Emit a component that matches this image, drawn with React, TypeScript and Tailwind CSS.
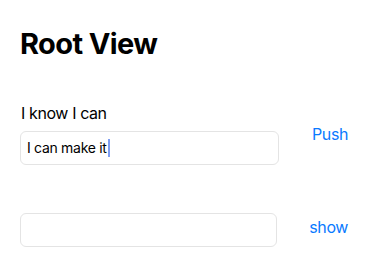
export default function App() {
  return (
    <div className="w-[380px] h-[264px] bg-white pl-5 pr-8 pt-[26px] font-['Inter','Noto_Sans',sans-serif] text-black overflow-hidden">
      {/* Title */}
      <h1 className="text-[29px] leading-[36px] font-bold tracking-[-0.6px]">Root View</h1>

      {/* First row: label + field, push button */}
      <div className="mt-[40px] flex items-center gap-[33px]">
        <div className="flex-1 flex flex-col">
          <p className="text-[16px] leading-[22px] tracking-[-0.4px] pl-[1px]">I know I can</p>
          <div className="mt-[7px] h-[34px] rounded-[6px] border border-[#e4e4e4] pl-[6px] flex items-center text-[14px] leading-[20px] tracking-[-0.3px]">
            <span>I can make it</span>
            <span className="shrink-0 w-[2px] h-[18px] bg-[#7f9ef2] ml-[1px]" />
          </div>
        </div>
        <button className="w-[36px] text-right whitespace-nowrap text-[16px] leading-[22px] tracking-[-0.4px] text-[#0a7aff]">
          Push
        </button>
      </div>

      {/* Second row: empty field, show button */}
      <div className="mt-[48px] flex items-center gap-[32px]">
        <div className="flex-1 h-[34px] rounded-[6px] border border-[#e4e4e4]" />
        <button className="w-[39px] mb-[6px] text-right whitespace-nowrap text-[16px] leading-[22px] tracking-[-0.4px] text-[#0a7aff]">
          show
        </button>
      </div>
    </div>
  );
}
